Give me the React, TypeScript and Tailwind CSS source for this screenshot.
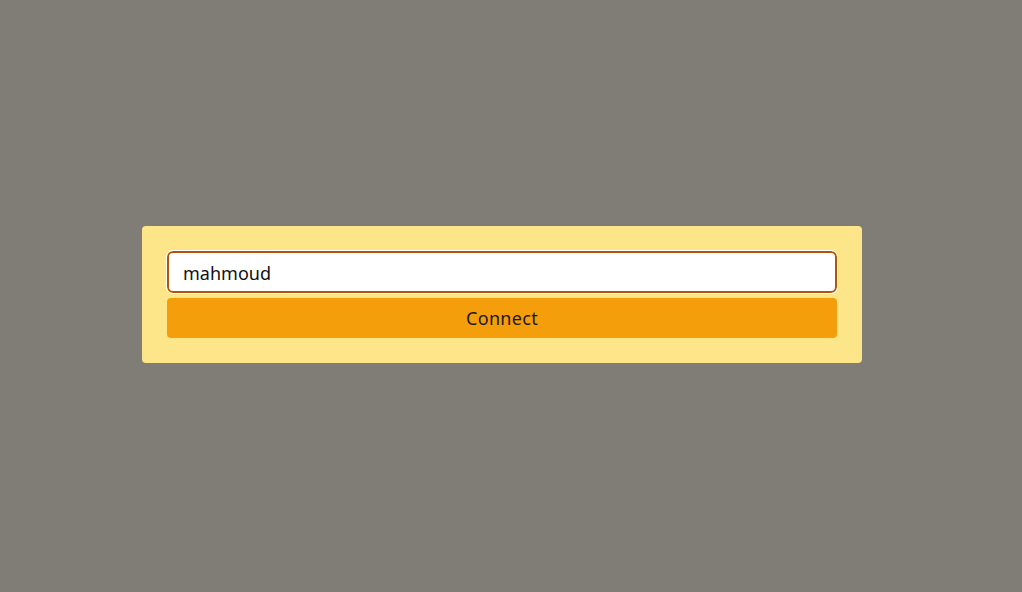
import { useState } from 'react';

export default function App() {
  const [name, setName] = useState('mahmoud');

  return (
    <div className="h-[592px] w-full bg-[#807d76] flex items-center justify-center pr-[18px] pb-[3px] font-['Noto_Sans',sans-serif]">
      <div className="w-[720px] bg-[#fde68a] rounded-[4px] p-[25px] flex flex-col gap-[5px]">
        <input
          autoFocus
          value={name}
          onChange={(e) => setName(e.target.value)}
          className="h-[42px] w-full bg-white border-2 border-[#b45309] rounded-[6px] px-[14px] pt-[2px] text-[18px] text-[#111111] outline outline-1 outline-white"
        />
        <button className="h-[40px] w-full bg-[#f59e0b] rounded-[4px] pt-[1px] text-[18px] tracking-[0.3px] text-[#1c1917]">
          Connect
        </button>
      </div>
    </div>
  );
}
